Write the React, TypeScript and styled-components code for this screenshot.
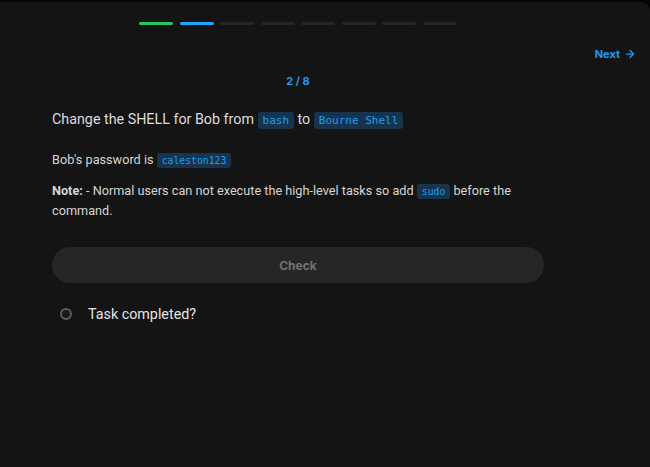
import React from "react";
import styled, { createGlobalStyle } from "styled-components";
import { ArrowRight } from "lucide-react";

const Global = createGlobalStyle`
  html, body { margin: 0; padding: 0; background: #050505; }
  body { font-family: Roboto, Inter, "Noto Sans", sans-serif; }
`;

const Panel = styled.div`
  margin-top: 2px;
  min-height: 465px;
  background: #141414;
  border-top-right-radius: 8px;
  display: flex;
  flex-direction: column;
  padding-top: 20px;
  box-sizing: border-box;
`;

const Column = styled.div`
  width: 492px;
  margin-left: 52px;
  display: flex;
  flex-direction: column;
`;

const Progress = styled.div`
  display: flex;
  justify-content: center;
  gap: 6.5px;
`;

const Bar = styled.div<{ $color: string }>`
  width: 34px;
  height: 3px;
  border-radius: 2px;
  background: ${(p) => p.$color};
`;

const TopBar = styled.div`
  display: flex;
  justify-content: flex-end;
  padding-right: 14px;
  margin-top: 21px;
`;

const NextButton = styled.button`
  display: flex;
  align-items: center;
  gap: 4px;
  background: none;
  border: none;
  padding: 0;
  color: #1d9bf0;
  font-family: Inter, sans-serif;
  font-weight: 700;
  font-size: 11px;
  line-height: 16px;
`;

const Counter = styled.div`
  margin-top: 11px;
  text-align: center;
  color: #1d9bf0;
  font-family: Inter, sans-serif;
  font-weight: 700;
  font-size: 11px;
  line-height: 16px;
`;

const Title = styled.h1`
  margin: 20px 0 0;
  font-weight: 400;
  font-size: 14.3px;
  line-height: 20px;
  color: #dcdcdc;
`;

const Para = styled.p<{ $mt: number }>`
  margin: ${(p) => p.$mt}px 0 0;
  font-size: 12.7px;
  line-height: 20px;
  color: #d4d4d4;
`;

const Code = styled.code`
  font-family: "DejaVu Sans Mono", "Liberation Mono", monospace;
  font-size: 0.77em;
  line-height: 1;
  background: #16344d;
  color: #1f9df2;
  border-radius: 3px;
  padding: 2px 5px;
`;

const CheckButton = styled.button`
  margin-top: 26px;
  height: 36px;
  width: 100%;
  border: none;
  border-radius: 18px;
  background: #262626;
  color: #737373;
  font-family: Inter, sans-serif;
  font-weight: 700;
  font-size: 12px;
`;

const TaskRow = styled.label`
  margin-top: 21px;
  display: flex;
  align-items: center;
  gap: 16px;
  padding-left: 8px;
  height: 20px;
  color: #e5e5e5;
  font-size: 14.3px;
`;

const Ring = styled.span`
  width: 12px;
  height: 12px;
  box-sizing: border-box;
  border-radius: 50%;
  border: 2.5px solid #5c5c5c;
  background: #1a1a1a;
`;

const colors = ["#22c55e", "#1ea7fd", "#262626", "#262626", "#262626", "#262626", "#262626", "#262626"];

export default function App() {
  return (
    <>
      <Global />
      <Panel>
        <Column>
          <Progress>
            {colors.map((c, i) => (
              <Bar key={i} $color={c} />
            ))}
          </Progress>
        </Column>
        <TopBar>
          <NextButton>
            Next <ArrowRight size={12} strokeWidth={2.5} />
          </NextButton>
        </TopBar>
        <Column>
          <Counter>2 / 8</Counter>
          <Title>
            Change the SHELL for Bob from <Code>bash</Code> to <Code>Bourne Shell</Code>
          </Title>
          <Para $mt={21}>
            Bob's password is <Code>caleston123</Code>
          </Para>
          <Para $mt={11}>
            <strong>Note:</strong> - Normal users can not execute the high-level tasks so add <Code>sudo</Code> before the command.
          </Para>
          <CheckButton>Check</CheckButton>
          <TaskRow>
            <Ring />
            Task completed?
          </TaskRow>
        </Column>
      </Panel>
    </>
  );
}
